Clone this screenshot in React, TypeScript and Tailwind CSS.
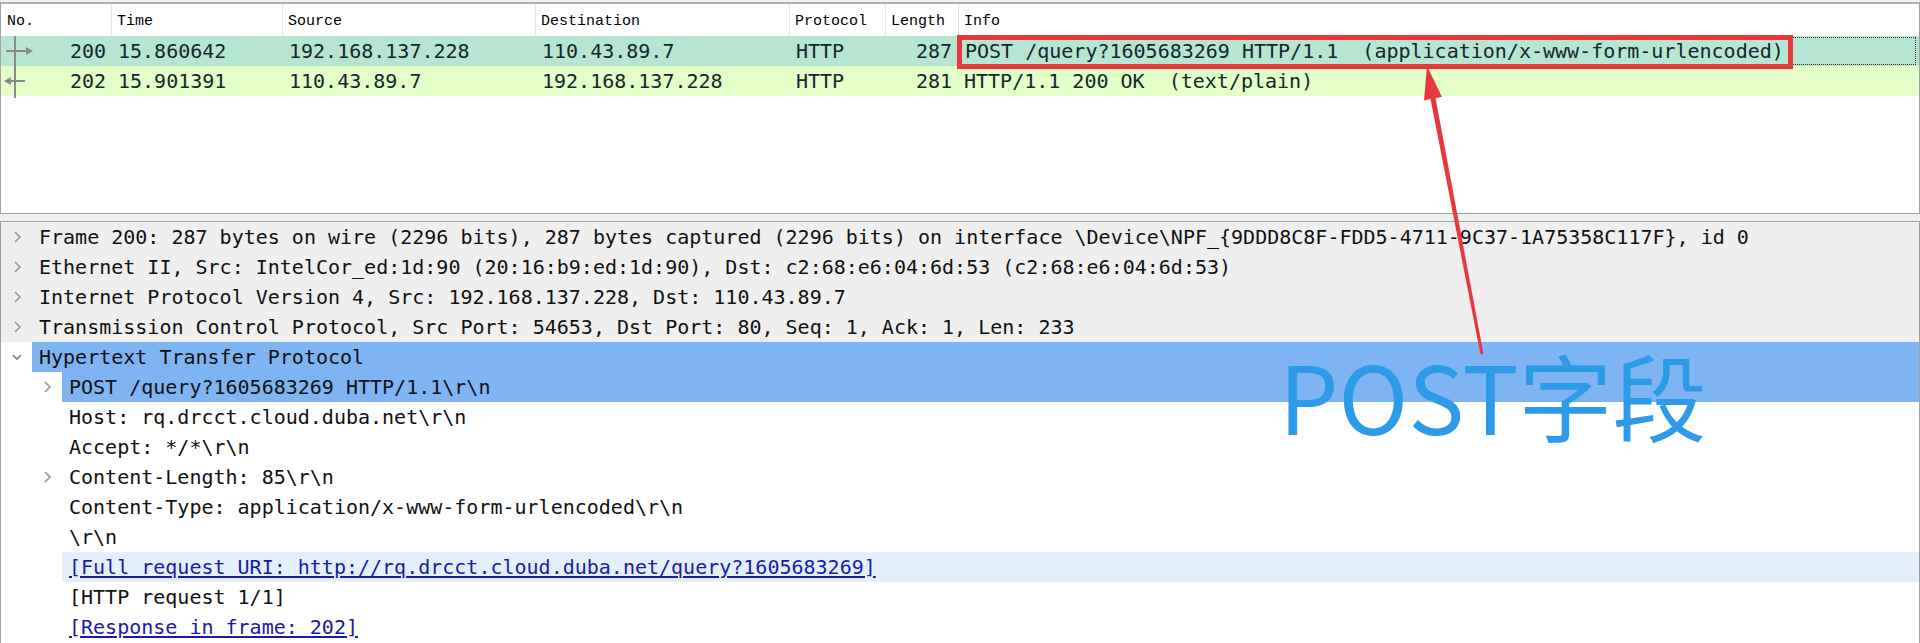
import React from 'react'

type Packet = {
  no: string
  time: string
  src: string
  dst: string
  proto: string
  len: string
  info: string
  bg: string
  selected?: boolean
}

const packets: Packet[] = [
  {
    no: '200',
    time: '15.860642',
    src: '192.168.137.228',
    dst: '110.43.89.7',
    proto: 'HTTP',
    len: '287',
    info: 'POST /query?1605683269 HTTP/1.1  (application/x-www-form-urlencoded)',
    bg: 'bg-[#b6e5d2]',
    selected: true,
  },
  {
    no: '202',
    time: '15.901391',
    src: '110.43.89.7',
    dst: '192.168.137.228',
    proto: 'HTTP',
    len: '281',
    info: 'HTTP/1.1 200 OK  (text/plain)',
    bg: 'bg-[#e4ffc7]',
  },
]

type Detail = {
  text: string
  level: number
  chevron?: 'right' | 'down'
  kind?: 'gray' | 'selected' | 'hint'
  link?: boolean
}

const details: Detail[] = [
  {
    text: 'Frame 200: 287 bytes on wire (2296 bits), 287 bytes captured (2296 bits) on interface \\Device\\NPF_{9DDD8C8F-FDD5-4711-9C37-1A75358C117F}, id 0',
    level: 0,
    chevron: 'right',
    kind: 'gray',
  },
  {
    text: 'Ethernet II, Src: IntelCor_ed:1d:90 (20:16:b9:ed:1d:90), Dst: c2:68:e6:04:6d:53 (c2:68:e6:04:6d:53)',
    level: 0,
    chevron: 'right',
    kind: 'gray',
  },
  {
    text: 'Internet Protocol Version 4, Src: 192.168.137.228, Dst: 110.43.89.7',
    level: 0,
    chevron: 'right',
    kind: 'gray',
  },
  {
    text: 'Transmission Control Protocol, Src Port: 54653, Dst Port: 80, Seq: 1, Ack: 1, Len: 233',
    level: 0,
    chevron: 'right',
    kind: 'gray',
  },
  { text: 'Hypertext Transfer Protocol', level: 0, chevron: 'down', kind: 'selected' },
  { text: 'POST /query?1605683269 HTTP/1.1\\r\\n', level: 1, chevron: 'right', kind: 'selected' },
  { text: 'Host: rq.drcct.cloud.duba.net\\r\\n', level: 1 },
  { text: 'Accept: */*\\r\\n', level: 1 },
  { text: 'Content-Length: 85\\r\\n', level: 1, chevron: 'right' },
  { text: 'Content-Type: application/x-www-form-urlencoded\\r\\n', level: 1 },
  { text: '\\r\\n', level: 1 },
  {
    text: '[Full request URI: http://rq.drcct.cloud.duba.net/query?1605683269]',
    level: 1,
    kind: 'hint',
    link: true,
  },
  { text: '[HTTP request 1/1]', level: 1 },
  { text: '[Response in frame: 202]', level: 1, link: true },
]

function Chevron({ dir }: { dir: 'right' | 'down' }) {
  if (dir === 'down') {
    return (
      <svg width="12" height="12" viewBox="0 0 12 12">
        <path d="M2 4 L6 8 L10 4" fill="none" stroke="#808080" strokeWidth="1.7" />
      </svg>
    )
  }
  return (
    <svg width="12" height="14" viewBox="0 0 12 14">
      <path d="M4 2 L9 7 L4 12" fill="none" stroke="#999" strokeWidth="1.7" />
    </svg>
  )
}

export default function App() {
  return (
    <div className="relative w-[1920px] h-[643px] overflow-hidden bg-[#f0f0f0] font-['DejaVu_Sans_Mono',monospace]">
      {/* Packet list */}
      <div className="mt-[2px] h-[212px] bg-white border-t-2 border-x border-b border-t-[#b0b0b0] border-x-[#a0a0a0] border-b-[#a0a0a0] flex flex-col">
        <div className="h-[32px] flex font-['Liberation_Mono',monospace] text-[15px] text-black">
          <div className="w-[111px] border-r border-[#e5e5e5] flex items-center pt-[5px] pl-[6px]">No.</div>
          <div className="w-[171px] border-r border-[#e5e5e5] flex items-center pt-[5px] pl-[5px]">Time</div>
          <div className="w-[253px] border-r border-[#e5e5e5] flex items-center pt-[5px] pl-[5px]">Source</div>
          <div className="w-[254px] border-r border-[#e5e5e5] flex items-center pt-[5px] pl-[5px]">Destination</div>
          <div className="w-[96px] border-r border-[#e5e5e5] flex items-center pt-[5px] pl-[5px]">Protocol</div>
          <div className="w-[73px] border-r border-[#e5e5e5] flex items-center pt-[5px] pl-[5px]">Length</div>
          <div className="flex-1 flex items-center pt-[5px] pl-[5px]">Info</div>
        </div>
        <div className="relative">
          {packets.map((p) => (
            <div key={p.no} className={`h-[30px] flex text-[20px] text-[#12272e] whitespace-pre ${p.bg}`}>
              <div className="w-[111px] flex items-center justify-end pr-[6px]">{p.no}</div>
              <div className="w-[171px] flex items-center pl-[6px]">{p.time}</div>
              <div className="w-[253px] flex items-center pl-[6px]">{p.src}</div>
              <div className="w-[254px] flex items-center pl-[6px]">{p.dst}</div>
              <div className="w-[96px] flex items-center pl-[6px]">{p.proto}</div>
              <div className="w-[73px] flex items-center justify-end pr-[7px]">{p.len}</div>
              <div
                className={`flex-1 flex items-center pl-[5px] mr-[3px] ${
                  p.selected ? 'border border-dotted border-[#333] my-[1px]' : ''
                }`}
              >
                {p.info}
              </div>
            </div>
          ))}
          {/* related packet marks */}
          <svg className="absolute left-0 top-0" width="40" height="64" viewBox="0 0 40 64">
            <line x1="14" y1="0" x2="14" y2="62" stroke="#8a8a8a" strokeWidth="2" />
            <line x1="5" y1="15" x2="29" y2="15" stroke="#8a8a8a" strokeWidth="2" />
            <path d="M25 11 L32 15 L25 19 Z" fill="#8a8a8a" />
            <line x1="6" y1="45" x2="24" y2="45" stroke="#8a8a8a" strokeWidth="2" />
            <path d="M10 41 L3 45 L10 49 Z" fill="#8a8a8a" />
          </svg>
        </div>
      </div>

      {/* Packet details */}
      <div className="mt-[7px] h-[422px] bg-white border-t border-x border-[#a0a0a0] text-[20px] text-[#111]">
        {details.map((d, i) => (
          <div
            key={i}
            className={`h-[30px] flex whitespace-pre ${d.kind === 'gray' ? 'bg-[#efefef]' : ''}`}
          >
            {d.level > 0 && <div className="w-[30px]" />}
            <div className="w-[31px] flex items-center justify-center">
              {d.chevron && <Chevron dir={d.chevron} />}
            </div>
            <div
              className={`flex-1 flex items-center pl-[7px] ${
                d.kind === 'selected' ? 'bg-[#7fb4f2]' : d.kind === 'hint' ? 'bg-[#e3f0fc]' : ''
              }`}
            >
              {d.link ? (
                <span className="text-[#1a1aa8] underline underline-offset-2">{d.text}</span>
              ) : (
                d.text
              )}
            </div>
          </div>
        ))}
      </div>

      {/* Annotation: red box around Info */}
      <div className="absolute left-[957px] top-[35px] w-[836px] h-[34px] border-[5px] border-[#e8383d]" />

      {/* Annotation arrow */}
      <svg className="absolute left-0 top-0 pointer-events-none" width="1920" height="643" viewBox="0 0 1920 643">
        <polygon
          points="1427,66 1442,97 1435.5,98 1483.5,354 1480.5,354.5 1430.5,99 1424,100.5"
          fill="#e8383d"
        />
      </svg>

      {/* Annotation label */}
      <div className="absolute left-[1279px] top-[347px] leading-none text-[94px] text-[#2e9be8] font-['Noto_Sans_CJK_SC','Noto_Sans',sans-serif] whitespace-nowrap">
        POST字段
      </div>
    </div>
  )
}
